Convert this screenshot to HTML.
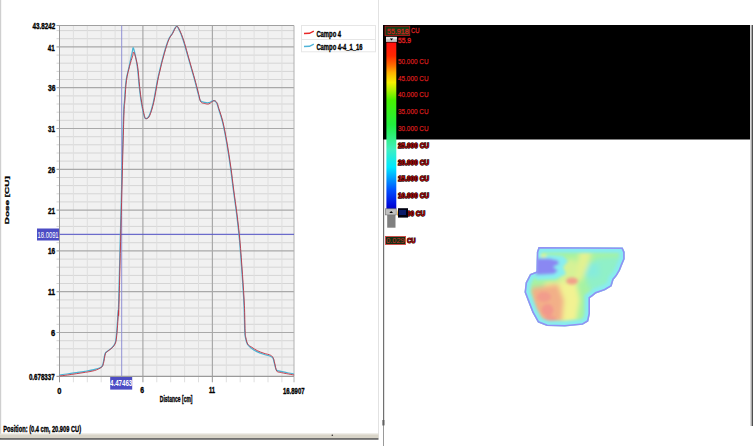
<!DOCTYPE html>
<html><head><meta charset="utf-8"><style>
html,body{margin:0;padding:0;background:#fff;width:753px;height:446px;overflow:hidden;}
svg{position:absolute;left:0;top:0;font-family:"Liberation Sans",sans-serif;}
</style></head><body>
<svg width="753" height="446" viewBox="0 0 753 446">
<rect x="0" y="0" width="1.2" height="439" fill="#cfcfcf"/>
<rect x="378" y="0" width="1" height="438" fill="#e2e2e2"/>
<rect x="0" y="433.7" width="378.5" height="4.6" fill="#d8d4c8"/><rect x="0" y="433.7" width="378.5" height="1" fill="#e8e4dc"/>
<rect x="0" y="438.3" width="378.5" height="1.3" fill="#383838"/>
<circle cx="332.3" cy="435.3" r="0.8" fill="#303030"/>
<rect x="383" y="25" width="1" height="421" fill="#9a9a9a"/>
<rect x="383" y="25" width="1.2" height="400" fill="#707070"/>
<rect x="382.4" y="420" width="2" height="5.5" fill="#606060"/>
<rect x="750" y="25" width="1.6" height="401" fill="#d8d8d8"/>
<rect x="751.6" y="25" width="1.4" height="401" fill="#505050"/>
<rect x="59.5" y="25.5" width="234.5" height="350.8" fill="#f1f1f1"/>
<line x1="56.5" y1="365.1" x2="294.0" y2="365.1" stroke="#d5d5d5" stroke-width="1"/>
<line x1="56.5" y1="357.0" x2="294.0" y2="357.0" stroke="#d5d5d5" stroke-width="1"/>
<line x1="56.5" y1="348.8" x2="294.0" y2="348.8" stroke="#d5d5d5" stroke-width="1"/>
<line x1="56.5" y1="340.7" x2="294.0" y2="340.7" stroke="#d5d5d5" stroke-width="1"/>
<line x1="56.5" y1="324.3" x2="294.0" y2="324.3" stroke="#d5d5d5" stroke-width="1"/>
<line x1="56.5" y1="316.2" x2="294.0" y2="316.2" stroke="#d5d5d5" stroke-width="1"/>
<line x1="56.5" y1="308.0" x2="294.0" y2="308.0" stroke="#d5d5d5" stroke-width="1"/>
<line x1="56.5" y1="299.9" x2="294.0" y2="299.9" stroke="#d5d5d5" stroke-width="1"/>
<line x1="56.5" y1="283.5" x2="294.0" y2="283.5" stroke="#d5d5d5" stroke-width="1"/>
<line x1="56.5" y1="275.4" x2="294.0" y2="275.4" stroke="#d5d5d5" stroke-width="1"/>
<line x1="56.5" y1="267.2" x2="294.0" y2="267.2" stroke="#d5d5d5" stroke-width="1"/>
<line x1="56.5" y1="259.1" x2="294.0" y2="259.1" stroke="#d5d5d5" stroke-width="1"/>
<line x1="56.5" y1="242.7" x2="294.0" y2="242.7" stroke="#d5d5d5" stroke-width="1"/>
<line x1="56.5" y1="234.6" x2="294.0" y2="234.6" stroke="#d5d5d5" stroke-width="1"/>
<line x1="56.5" y1="226.4" x2="294.0" y2="226.4" stroke="#d5d5d5" stroke-width="1"/>
<line x1="56.5" y1="218.3" x2="294.0" y2="218.3" stroke="#d5d5d5" stroke-width="1"/>
<line x1="56.5" y1="201.9" x2="294.0" y2="201.9" stroke="#d5d5d5" stroke-width="1"/>
<line x1="56.5" y1="193.8" x2="294.0" y2="193.8" stroke="#d5d5d5" stroke-width="1"/>
<line x1="56.5" y1="185.6" x2="294.0" y2="185.6" stroke="#d5d5d5" stroke-width="1"/>
<line x1="56.5" y1="177.5" x2="294.0" y2="177.5" stroke="#d5d5d5" stroke-width="1"/>
<line x1="56.5" y1="161.1" x2="294.0" y2="161.1" stroke="#d5d5d5" stroke-width="1"/>
<line x1="56.5" y1="153.0" x2="294.0" y2="153.0" stroke="#d5d5d5" stroke-width="1"/>
<line x1="56.5" y1="144.8" x2="294.0" y2="144.8" stroke="#d5d5d5" stroke-width="1"/>
<line x1="56.5" y1="136.7" x2="294.0" y2="136.7" stroke="#d5d5d5" stroke-width="1"/>
<line x1="56.5" y1="120.3" x2="294.0" y2="120.3" stroke="#d5d5d5" stroke-width="1"/>
<line x1="56.5" y1="112.2" x2="294.0" y2="112.2" stroke="#d5d5d5" stroke-width="1"/>
<line x1="56.5" y1="104.0" x2="294.0" y2="104.0" stroke="#d5d5d5" stroke-width="1"/>
<line x1="56.5" y1="95.9" x2="294.0" y2="95.9" stroke="#d5d5d5" stroke-width="1"/>
<line x1="56.5" y1="79.5" x2="294.0" y2="79.5" stroke="#d5d5d5" stroke-width="1"/>
<line x1="56.5" y1="71.4" x2="294.0" y2="71.4" stroke="#d5d5d5" stroke-width="1"/>
<line x1="56.5" y1="63.2" x2="294.0" y2="63.2" stroke="#d5d5d5" stroke-width="1"/>
<line x1="56.5" y1="55.1" x2="294.0" y2="55.1" stroke="#d5d5d5" stroke-width="1"/>
<line x1="56.5" y1="38.7" x2="294.0" y2="38.7" stroke="#d5d5d5" stroke-width="1"/>
<line x1="56.5" y1="30.6" x2="294.0" y2="30.6" stroke="#d5d5d5" stroke-width="1"/>
<line x1="73.4" y1="25.5" x2="73.4" y2="382.3" stroke="#dfdfdf" stroke-width="1"/>
<line x1="87.3" y1="25.5" x2="87.3" y2="382.3" stroke="#dfdfdf" stroke-width="1"/>
<line x1="101.2" y1="25.5" x2="101.2" y2="382.3" stroke="#dfdfdf" stroke-width="1"/>
<line x1="115.1" y1="25.5" x2="115.1" y2="382.3" stroke="#dfdfdf" stroke-width="1"/>
<line x1="129.0" y1="25.5" x2="129.0" y2="382.3" stroke="#dfdfdf" stroke-width="1"/>
<line x1="156.8" y1="25.5" x2="156.8" y2="382.3" stroke="#dfdfdf" stroke-width="1"/>
<line x1="170.7" y1="25.5" x2="170.7" y2="382.3" stroke="#dfdfdf" stroke-width="1"/>
<line x1="184.6" y1="25.5" x2="184.6" y2="382.3" stroke="#dfdfdf" stroke-width="1"/>
<line x1="198.5" y1="25.5" x2="198.5" y2="382.3" stroke="#dfdfdf" stroke-width="1"/>
<line x1="226.3" y1="25.5" x2="226.3" y2="382.3" stroke="#dfdfdf" stroke-width="1"/>
<line x1="240.2" y1="25.5" x2="240.2" y2="382.3" stroke="#dfdfdf" stroke-width="1"/>
<line x1="254.1" y1="25.5" x2="254.1" y2="382.3" stroke="#dfdfdf" stroke-width="1"/>
<line x1="268.0" y1="25.5" x2="268.0" y2="382.3" stroke="#dfdfdf" stroke-width="1"/>
<line x1="281.9" y1="25.5" x2="281.9" y2="382.3" stroke="#dfdfdf" stroke-width="1"/>
<line x1="56.5" y1="332.5" x2="294.0" y2="332.5" stroke="#a9a9a9" stroke-width="1.2"/>
<line x1="56.5" y1="291.7" x2="294.0" y2="291.7" stroke="#a9a9a9" stroke-width="1.2"/>
<line x1="56.5" y1="250.9" x2="294.0" y2="250.9" stroke="#a9a9a9" stroke-width="1.2"/>
<line x1="56.5" y1="210.1" x2="294.0" y2="210.1" stroke="#a9a9a9" stroke-width="1.2"/>
<line x1="56.5" y1="169.3" x2="294.0" y2="169.3" stroke="#a9a9a9" stroke-width="1.2"/>
<line x1="56.5" y1="128.5" x2="294.0" y2="128.5" stroke="#a9a9a9" stroke-width="1.2"/>
<line x1="56.5" y1="87.7" x2="294.0" y2="87.7" stroke="#a9a9a9" stroke-width="1.2"/>
<line x1="56.5" y1="46.9" x2="294.0" y2="46.9" stroke="#a9a9a9" stroke-width="1.2"/>
<line x1="142.9" y1="25.5" x2="142.9" y2="382.3" stroke="#a9a9a9" stroke-width="1.2"/>
<line x1="212.4" y1="25.5" x2="212.4" y2="382.3" stroke="#a9a9a9" stroke-width="1.2"/>
<line x1="56.5" y1="25.5" x2="294.0" y2="25.5" stroke="#a0a0a0" stroke-width="1"/>
<line x1="294.0" y1="25.5" x2="294.0" y2="382.3" stroke="#b0b0b0" stroke-width="1"/>
<line x1="59.5" y1="25.5" x2="59.5" y2="382.3" stroke="#999999" stroke-width="1"/>
<line x1="56.5" y1="376.3" x2="294.0" y2="376.3" stroke="#9a9a9a" stroke-width="1.2"/>
<line x1="121.7" y1="25.5" x2="121.7" y2="376.3" stroke="#9090d4" stroke-width="1"/>
<line x1="59.5" y1="234.3" x2="294.0" y2="234.3" stroke="#5050c8" stroke-width="1"/>
<path d="M59.00,375.00 C60.33,374.83 64.17,374.38 67.00,374.00 C69.83,373.62 73.00,373.15 76.00,372.70 C79.00,372.25 82.00,371.82 85.00,371.30 C88.00,370.78 91.33,370.27 94.00,369.60 C96.67,368.93 99.50,368.28 101.00,367.30 C102.50,366.32 102.33,365.95 103.00,363.70 C103.67,361.45 104.27,355.88 105.00,353.80 C105.73,351.72 106.23,352.23 107.40,351.20 C108.57,350.17 110.72,348.95 112.00,347.60 C113.28,346.25 114.38,345.05 115.10,343.10 C115.82,341.15 115.95,338.90 116.30,335.90 C116.65,332.90 116.90,329.28 117.20,325.10 C117.50,320.92 117.85,314.98 118.10,310.80 C118.35,306.62 117.87,330.35 118.70,300.00 C119.53,269.65 122.13,161.95 123.10,128.70 C124.07,95.45 124.00,108.57 124.50,100.50 C125.00,92.43 125.32,86.02 126.10,80.30 C126.88,74.58 128.18,70.90 129.20,66.20 C130.22,61.50 131.47,55.05 132.20,52.10 C132.93,49.15 132.77,46.15 133.60,48.50 C134.43,50.85 136.27,59.88 137.20,66.20 C138.13,72.52 138.52,80.35 139.20,86.40 C139.88,92.45 140.45,97.47 141.30,102.50 C142.15,107.53 143.47,113.92 144.30,116.60 C145.13,119.28 145.47,118.77 146.30,118.60 C147.13,118.43 148.13,118.28 149.30,115.60 C150.47,112.92 151.95,108.38 153.30,102.50 C154.65,96.62 156.28,85.88 157.40,80.30 C158.52,74.72 159.22,72.33 160.00,69.00 C160.78,65.67 161.08,64.10 162.10,60.30 C163.12,56.50 164.93,49.88 166.10,46.20 C167.27,42.52 168.10,40.28 169.10,38.20 C170.10,36.12 170.92,35.65 172.10,33.70 C173.28,31.75 175.02,27.10 176.20,26.50 C177.38,25.90 178.03,27.82 179.20,30.10 C180.37,32.38 181.85,36.17 183.20,40.20 C184.55,44.23 185.95,49.60 187.30,54.30 C188.65,59.00 189.97,63.70 191.30,68.40 C192.63,73.10 194.12,78.13 195.30,82.50 C196.48,86.87 197.55,91.57 198.40,94.60 C199.25,97.63 199.40,99.42 200.40,100.70 C201.40,101.98 203.05,101.97 204.40,102.30 C205.75,102.63 206.98,102.97 208.50,102.70 C210.02,102.43 212.17,100.70 213.50,100.70 C214.83,100.70 215.68,101.42 216.50,102.70 C217.32,103.98 217.40,105.20 218.40,108.40 C219.40,111.60 221.15,116.30 222.50,121.90 C223.85,127.50 225.17,134.38 226.50,142.00 C227.83,149.62 229.38,159.77 230.50,167.60 C231.62,175.43 232.17,181.12 233.20,189.00 C234.23,196.88 235.65,206.32 236.70,214.90 C237.75,223.48 238.60,230.53 239.50,240.50 C240.40,250.47 241.35,263.92 242.10,274.70 C242.85,285.48 243.57,295.85 244.00,305.20 C244.43,314.55 244.47,325.42 244.70,330.80 C244.93,336.18 244.95,335.27 245.40,337.50 C245.85,339.73 246.38,342.40 247.40,344.20 C248.42,346.00 249.93,347.07 251.50,348.30 C253.07,349.53 254.78,350.60 256.80,351.60 C258.82,352.60 261.35,353.52 263.60,354.30 C265.85,355.08 268.73,355.63 270.30,356.30 C271.87,356.97 272.33,357.17 273.00,358.30 C273.67,359.43 273.75,361.18 274.30,363.10 C274.85,365.02 275.40,368.47 276.30,369.80 C277.20,371.13 278.02,370.65 279.70,371.10 C281.38,371.55 284.05,372.05 286.40,372.50 C288.75,372.95 292.57,373.58 293.80,373.80" fill="none" stroke="#48b4d4" stroke-width="1.2" stroke-linejoin="round"/>
<path d="M59.40,376.00 C60.73,375.83 64.57,375.38 67.40,375.00 C70.23,374.62 73.40,374.15 76.40,373.70 C79.40,373.25 82.40,372.82 85.40,372.30 C88.40,371.78 91.73,371.43 94.40,370.60 C97.07,369.77 99.90,368.45 101.40,367.30 C102.90,366.15 102.73,365.95 103.40,363.70 C104.07,361.45 104.67,355.88 105.40,353.80 C106.13,351.72 106.63,352.23 107.80,351.20 C108.97,350.17 111.12,348.95 112.40,347.60 C113.68,346.25 114.78,345.05 115.50,343.10 C116.22,341.15 116.35,338.90 116.70,335.90 C117.05,332.90 117.30,329.28 117.60,325.10 C117.90,320.92 118.25,314.98 118.50,310.80 C118.75,306.62 118.27,330.35 119.10,300.00 C119.93,269.65 122.53,161.95 123.50,128.70 C124.47,95.45 124.40,108.57 124.90,100.50 C125.40,92.43 125.72,86.02 126.50,80.30 C127.28,74.58 128.58,70.23 129.60,66.20 C130.62,62.17 131.87,58.38 132.60,56.10 C133.33,53.82 133.17,50.82 134.00,52.50 C134.83,54.18 136.67,60.55 137.60,66.20 C138.53,71.85 138.92,80.35 139.60,86.40 C140.28,92.45 140.85,97.47 141.70,102.50 C142.55,107.53 143.87,113.92 144.70,116.60 C145.53,119.28 145.87,118.77 146.70,118.60 C147.53,118.43 148.53,118.28 149.70,115.60 C150.87,112.92 152.35,108.38 153.70,102.50 C155.05,96.62 156.68,85.88 157.80,80.30 C158.92,74.72 159.62,72.33 160.40,69.00 C161.18,65.67 161.48,64.10 162.50,60.30 C163.52,56.50 165.33,49.88 166.50,46.20 C167.67,42.52 168.50,40.28 169.50,38.20 C170.50,36.12 171.32,35.65 172.50,33.70 C173.68,31.75 175.42,27.10 176.60,26.50 C177.78,25.90 178.43,27.82 179.60,30.10 C180.77,32.38 182.25,36.17 183.60,40.20 C184.95,44.23 186.35,49.60 187.70,54.30 C189.05,59.00 190.37,63.70 191.70,68.40 C193.03,73.10 194.52,78.13 195.70,82.50 C196.88,86.87 197.95,91.37 198.80,94.60 C199.65,97.83 199.80,100.42 200.80,101.90 C201.80,103.38 203.45,103.17 204.80,103.50 C206.15,103.83 207.38,104.37 208.90,103.90 C210.42,103.43 212.57,100.90 213.90,100.70 C215.23,100.50 216.08,101.42 216.90,102.70 C217.72,103.98 217.80,105.20 218.80,108.40 C219.80,111.60 221.55,116.30 222.90,121.90 C224.25,127.50 225.57,134.38 226.90,142.00 C228.23,149.62 229.78,159.77 230.90,167.60 C232.02,175.43 232.57,181.12 233.60,189.00 C234.63,196.88 236.05,206.32 237.10,214.90 C238.15,223.48 239.00,230.53 239.90,240.50 C240.80,250.47 241.75,263.92 242.50,274.70 C243.25,285.48 243.97,295.85 244.40,305.20 C244.83,314.55 244.87,325.42 245.10,330.80 C245.33,336.18 245.35,335.27 245.80,337.50 C246.25,339.73 246.78,342.57 247.80,344.20 C248.82,345.83 250.33,346.23 251.90,347.30 C253.47,348.37 255.18,349.60 257.20,350.60 C259.22,351.60 261.75,352.52 264.00,353.30 C266.25,354.08 269.13,354.47 270.70,355.30 C272.27,356.13 272.73,357.00 273.40,358.30 C274.07,359.60 274.15,360.98 274.70,363.10 C275.25,365.22 275.80,369.47 276.70,371.00 C277.60,372.53 278.42,371.85 280.10,372.30 C281.78,372.75 284.45,373.25 286.80,373.70 C289.15,374.15 292.97,374.78 294.20,375.00" fill="none" stroke="#c03444" stroke-width="1.0" stroke-linejoin="round" opacity="0.9"/>
<rect x="110.2" y="377" width="22" height="12.6" fill="#4c4cc4"/>
<rect x="37" y="228.5" width="22" height="12" fill="#4c4cc4"/>
<text x="32.60" y="28.72" font-size="9.2" font-weight="bold" fill="#000" stroke="#000" stroke-width="0.35" textLength="22.70" lengthAdjust="spacingAndGlyphs" >43.8242</text>
<text x="50.90" y="335.93" font-size="9.2" font-weight="bold" fill="#000" stroke="#000" stroke-width="0.35" textLength="4.20" lengthAdjust="spacingAndGlyphs" >6</text>
<text x="47.90" y="295.12" font-size="9.2" font-weight="bold" fill="#000" stroke="#000" stroke-width="0.35" textLength="7.20" lengthAdjust="spacingAndGlyphs" >11</text>
<text x="47.90" y="254.32" font-size="9.2" font-weight="bold" fill="#000" stroke="#000" stroke-width="0.35" textLength="7.20" lengthAdjust="spacingAndGlyphs" >16</text>
<text x="47.90" y="213.52" font-size="9.2" font-weight="bold" fill="#000" stroke="#000" stroke-width="0.35" textLength="7.20" lengthAdjust="spacingAndGlyphs" >21</text>
<text x="47.90" y="172.72" font-size="9.2" font-weight="bold" fill="#000" stroke="#000" stroke-width="0.35" textLength="7.20" lengthAdjust="spacingAndGlyphs" >26</text>
<text x="47.90" y="131.72" font-size="9.2" font-weight="bold" fill="#000" stroke="#000" stroke-width="0.35" textLength="7.00" lengthAdjust="spacingAndGlyphs" >31</text>
<text x="47.90" y="90.92" font-size="9.2" font-weight="bold" fill="#000" stroke="#000" stroke-width="0.35" textLength="7.60" lengthAdjust="spacingAndGlyphs" >36</text>
<text x="47.70" y="50.73" font-size="9.2" font-weight="bold" fill="#000" stroke="#000" stroke-width="0.35" textLength="6.90" lengthAdjust="spacingAndGlyphs" >41</text>
<text x="28.90" y="380.43" font-size="9.2" font-weight="bold" fill="#000" stroke="#000" stroke-width="0.35" textLength="25.80" lengthAdjust="spacingAndGlyphs" >0.678337</text>
<text x="57.30" y="394.02" font-size="9.2" font-weight="bold" fill="#000" stroke="#000" stroke-width="0.35" textLength="4.20" lengthAdjust="spacingAndGlyphs" >0</text>
<text x="140.30" y="393.12" font-size="9.2" font-weight="bold" fill="#000" stroke="#000" stroke-width="0.35" textLength="3.80" lengthAdjust="spacingAndGlyphs" >6</text>
<text x="208.90" y="393.12" font-size="9.2" font-weight="bold" fill="#000" stroke="#000" stroke-width="0.35" textLength="6.20" lengthAdjust="spacingAndGlyphs" >11</text>
<text x="282.90" y="393.62" font-size="9.2" font-weight="bold" fill="#000" stroke="#000" stroke-width="0.35" textLength="21.70" lengthAdjust="spacingAndGlyphs" >16.8907</text>
<text x="159.79" y="401.72" font-size="9.5" font-weight="bold" fill="#000" stroke="#000" stroke-width="0.35" textLength="32.72" lengthAdjust="spacingAndGlyphs" >Distance [cm]</text>
<text transform="translate(8.6,200.3) scale(0.62,1) rotate(-90)" font-size="10" font-weight="bold" stroke="#000" stroke-width="0.45" text-anchor="middle" textLength="48" lengthAdjust="spacingAndGlyphs">Dose [CU]</text>
<rect x="301.5" y="25.5" width="74" height="26.3" fill="#ffffff" stroke="#e6e6e6" stroke-width="1"/>
<line x1="301.5" y1="39.5" x2="375.5" y2="39.5" stroke="#e6e6e6" stroke-width="1"/>
<path d="M304,33.6 L309.5,33.3 L313.8,31.2" fill="none" stroke="#e82828" stroke-width="1.5"/>
<path d="M304,46.6 L309.5,46.3 L313.8,44.2" fill="none" stroke="#50b4d8" stroke-width="1.5"/>
<text x="316.40" y="37.12" font-size="9.2" font-weight="bold" fill="#000" stroke="#000" stroke-width="0.35" textLength="24.70" lengthAdjust="spacingAndGlyphs" >Campo 4</text>
<text x="316.40" y="50.23" font-size="9.2" font-weight="bold" fill="#000" stroke="#000" stroke-width="0.35" textLength="46.20" lengthAdjust="spacingAndGlyphs" >Campo 4-4_1_16</text>
<text x="3.20" y="431.62" font-size="9.2" font-weight="bold" fill="#000" stroke="#000" stroke-width="0.35" textLength="77.90" lengthAdjust="spacingAndGlyphs" >Position: (0.4 cm, 20.909 CU)</text>
<text x="110.03" y="386.00" font-size="9.0" font-weight="bold" fill="#ffffff"  textLength="22.24" lengthAdjust="spacingAndGlyphs" >4.47463</text>
<text x="37.61" y="238.20" font-size="9.6" font-weight="normal" fill="#ffffff"  textLength="20.98" lengthAdjust="spacingAndGlyphs" >18.0091</text>
<rect x="383" y="25" width="367" height="114.5" fill="#000"/>
<defs><linearGradient id="cb" x1="0" y1="0" x2="0" y2="1"><stop offset="0" stop-color="#ff1010"/><stop offset="0.08" stop-color="#ff2800"/><stop offset="0.14" stop-color="#ff7000"/><stop offset="0.18" stop-color="#ffb000"/><stop offset="0.24" stop-color="#f4f000"/><stop offset="0.29" stop-color="#a8f000"/><stop offset="0.345" stop-color="#48f000"/><stop offset="0.495" stop-color="#20f040"/><stop offset="0.57" stop-color="#30f080"/><stop offset="0.64" stop-color="#40f0c0"/><stop offset="0.75" stop-color="#00e8ff"/><stop offset="0.8" stop-color="#00b0ff"/><stop offset="0.885" stop-color="#0050ff"/><stop offset="0.97" stop-color="#0010e0"/><stop offset="1" stop-color="#0000c0"/></linearGradient>
<filter id="bl" x="-20%" y="-20%" width="140%" height="140%"><feGaussianBlur stdDeviation="3"/></filter>
<filter id="bl2" x="-20%" y="-20%" width="140%" height="140%"><feGaussianBlur stdDeviation="1"/></filter>
<clipPath id="shape"><path d="M537.4,248.5 L623.8,249 L624.9,257.4 L620.4,274.3 L613.7,279.9 L611.5,288.8 L593.5,294.4 L590.1,300 L589,315.8 L586.8,321.4 L571,324.7 L546.4,322.5 L537.4,311.3 L530.7,302.3 L525.1,288.8 L527.3,276.5 L531.8,273.1 L536.3,266.4 L537.4,257.4 Z"/></clipPath>
</defs>
<rect x="386.4" y="42.5" width="9.9" height="166.5" fill="url(#cb)"/>
<rect x="387.2" y="215" width="8.3" height="12.7" fill="#808080"/>
<rect x="385.1" y="26.2" width="24.6" height="9.2" fill="#163e16" stroke="#b41c1c" stroke-width="0.9"/>
<text x="387" y="33.9" font-size="8" fill="#cc2020" stroke="#cc2020" stroke-width="0.3" textLength="21.7" lengthAdjust="spacingAndGlyphs">55.918</text>
<text x="411" y="33.2" font-size="8" fill="#d82020" stroke="#d82020" stroke-width="0.3" textLength="8.5" lengthAdjust="spacingAndGlyphs">CU</text>
<rect x="386" y="36.9" width="10.9" height="5" fill="#c8c8c8"/>
<rect x="386" y="36.9" width="10.9" height="2.2" fill="#e8e8e8"/>
<path d="M389.8,38.5 L393.2,38.5 L391.5,40.4 Z" fill="#000"/>
<text x="398" y="43" font-size="8" fill="#e02020" stroke="#e02020" stroke-width="0.35" textLength="13" lengthAdjust="spacingAndGlyphs">55.9</text>
<text x="398" y="64.3" font-size="8" fill="#d81c1c" stroke="#d81c1c" stroke-width="0.25" textLength="30.5" lengthAdjust="spacingAndGlyphs">50.000 CU</text>
<text x="398" y="81.1" font-size="8" fill="#d81c1c" stroke="#d81c1c" stroke-width="0.25" textLength="30.5" lengthAdjust="spacingAndGlyphs">45.000 CU</text>
<text x="398" y="97.3" font-size="8" fill="#d81c1c" stroke="#d81c1c" stroke-width="0.25" textLength="30.5" lengthAdjust="spacingAndGlyphs">40.000 CU</text>
<text x="398" y="114.3" font-size="8" fill="#d81c1c" stroke="#d81c1c" stroke-width="0.25" textLength="30.5" lengthAdjust="spacingAndGlyphs">35.000 CU</text>
<text x="398" y="130.7" font-size="8" fill="#d81c1c" stroke="#d81c1c" stroke-width="0.25" textLength="30.5" lengthAdjust="spacingAndGlyphs">30.000 CU</text>
<text x="398" y="148.2" font-size="8" font-weight="bold" fill="#b01010" stroke="#280000" stroke-width="1.4" paint-order="stroke" textLength="31" lengthAdjust="spacingAndGlyphs">25.000 CU</text>
<text x="398" y="164.5" font-size="8" font-weight="bold" fill="#b01010" stroke="#280000" stroke-width="1.4" paint-order="stroke" textLength="31" lengthAdjust="spacingAndGlyphs">20.000 CU</text>
<text x="398" y="181.4" font-size="8" font-weight="bold" fill="#b01010" stroke="#280000" stroke-width="1.4" paint-order="stroke" textLength="31" lengthAdjust="spacingAndGlyphs">15.000 CU</text>
<text x="398" y="197.5" font-size="8" font-weight="bold" fill="#b01010" stroke="#280000" stroke-width="1.4" paint-order="stroke" textLength="31" lengthAdjust="spacingAndGlyphs">10.000 CU</text>
<rect x="385.4" y="208.8" width="10.8" height="6.1" fill="#c0c0c0" stroke="#707070" stroke-width="0.6"/>
<path d="M389.3,213 L393,213 L391.2,211 Z" fill="#000"/>
<text x="398" y="216" font-size="8" font-weight="bold" fill="#b01010" stroke="#280000" stroke-width="1.4" paint-order="stroke" textLength="27" lengthAdjust="spacingAndGlyphs">5.000 CU</text>
<rect x="398" y="208.2" width="10" height="9.4" fill="#000010"/>
<rect x="399" y="210" width="7" height="5" fill="#0a1a6a"/>
<rect x="385.4" y="236.4" width="20.2" height="8.1" fill="#123012" stroke="#e04040" stroke-width="0.8"/>
<text x="386.2" y="243" font-size="7.5" fill="#d03030" textLength="18.5" lengthAdjust="spacingAndGlyphs">0.029</text>
<text x="407" y="243.3" font-size="8" font-weight="bold" fill="#b01010" stroke="#280000" stroke-width="1.2" paint-order="stroke" textLength="8.5" lengthAdjust="spacingAndGlyphs">CU</text>
<defs><clipPath id="shp"><path d="M538.5,247 L622.7,247.5 L624.7,252 L624.7,259 L622,265.4 L620,270.6 L616.9,275.8 L613.6,279.7 L611.7,286.3 L605.1,290.2 L596,293.4 L592,296.7 L590,298 L590,313.6 L588.3,321.5 L582.7,324.8 L564.8,326.5 L546.9,326 L537.9,322.6 L532.3,312.5 L528.4,302.4 L524.5,292.3 L525.6,282.4 L530,274 L536.5,271.5 L536.8,252 Z"/></clipPath><filter id="b3" x="-30%" y="-30%" width="160%" height="160%"><feGaussianBlur stdDeviation="2.5"/></filter><filter id="b15" x="-30%" y="-30%" width="160%" height="160%"><feGaussianBlur stdDeviation="1.6"/></filter><filter id="b07" x="-30%" y="-30%" width="160%" height="160%"><feGaussianBlur stdDeviation="0.6"/></filter></defs>
<g filter="url(#b07)"><g clip-path="url(#shp)">
<path d="M538.5,247 L622.7,247.5 L624.7,252 L624.7,259 L622,265.4 L620,270.6 L616.9,275.8 L613.6,279.7 L611.7,286.3 L605.1,290.2 L596,293.4 L592,296.7 L590,298 L590,313.6 L588.3,321.5 L582.7,324.8 L564.8,326.5 L546.9,326 L537.9,322.6 L532.3,312.5 L528.4,302.4 L524.5,292.3 L525.6,282.4 L530,274 L536.5,271.5 L536.8,252 Z" fill="#a6f2a2"/>
<g filter="url(#b3)">
<path d="M596,258 L622,256 L618,275 L608,288 L592,292 L586,282 Z" fill="#90f0c8"/>
<path d="M582,264 L598,262 L600,276 L586,278 Z" fill="#86ecdc"/>
<path d="M546,282 L576,281 L580,300 L576,322 L545,324 L534,300 Z" fill="#f2f292"/>
<path d="M580,250 L592,250 L588,266 L582,280 L572,284 L576,266 Z" fill="#e2f292"/>
<path d="M560,262 L574,258 L578,272 L570,282 L558,280 Z" fill="#d6f296"/>
<path d="M531,288 L558,284 L564,300 L562,322 L545,325 L533,308 Z" fill="#f2b088"/>
</g>
<g filter="url(#b15)">
<ellipse cx="544" cy="297" rx="7" ry="5" fill="#f29c8c"/>
<ellipse cx="547.5" cy="310" rx="6" ry="6" fill="#f2988c"/>
<ellipse cx="550" cy="319" rx="6" ry="3.5" fill="#f29c8c"/>
<ellipse cx="572" cy="281" rx="6" ry="3.5" fill="#f2a08a"/>
</g>
<path d="M538.5,247 L622.7,247.5 L624.7,252 L624.7,259 L622,265.4 L620,270.6 L616.9,275.8 L613.6,279.7 L611.7,286.3 L605.1,290.2 L596,293.4 L592,296.7 L590,298 L590,313.6 L588.3,321.5 L582.7,324.8 L564.8,326.5 L546.9,326 L537.9,322.6 L532.3,312.5 L528.4,302.4 L524.5,292.3 L525.6,282.4 L530,274 L536.5,271.5 L536.8,252 Z" fill="none" stroke="#88ecf0" stroke-width="11" filter="url(#b15)"/>
<g filter="url(#b15)">
<path d="M536,255 L552,255 L563,256 L568,261 L563,267 L566,274 L556,279 L536,280 Z" fill="#88eef0"/>
<path d="M536,258.5 L550,258.5 L558,260.5 L559,264 L553,267 L558,270.5 L554,274 L536,275 Z" fill="#8a88f2"/>
<ellipse cx="543.5" cy="255.5" rx="3" ry="2" fill="#d8f29a"/>
</g>
<path d="M538.5,247 L622.7,247.5 L624.7,252 L624.7,259 L622,265.4 L620,270.6 L616.9,275.8 L613.6,279.7 L611.7,286.3 L605.1,290.2 L596,293.4 L592,296.7 L590,298 L590,313.6 L588.3,321.5 L582.7,324.8 L564.8,326.5 L546.9,326 L537.9,322.6 L532.3,312.5 L528.4,302.4 L524.5,292.3 L525.6,282.4 L530,274 L536.5,271.5 L536.8,252 Z" fill="none" stroke="#9290f4" stroke-width="3.2" filter="url(#b07)"/>
</g></g>
</svg>
</body></html>
